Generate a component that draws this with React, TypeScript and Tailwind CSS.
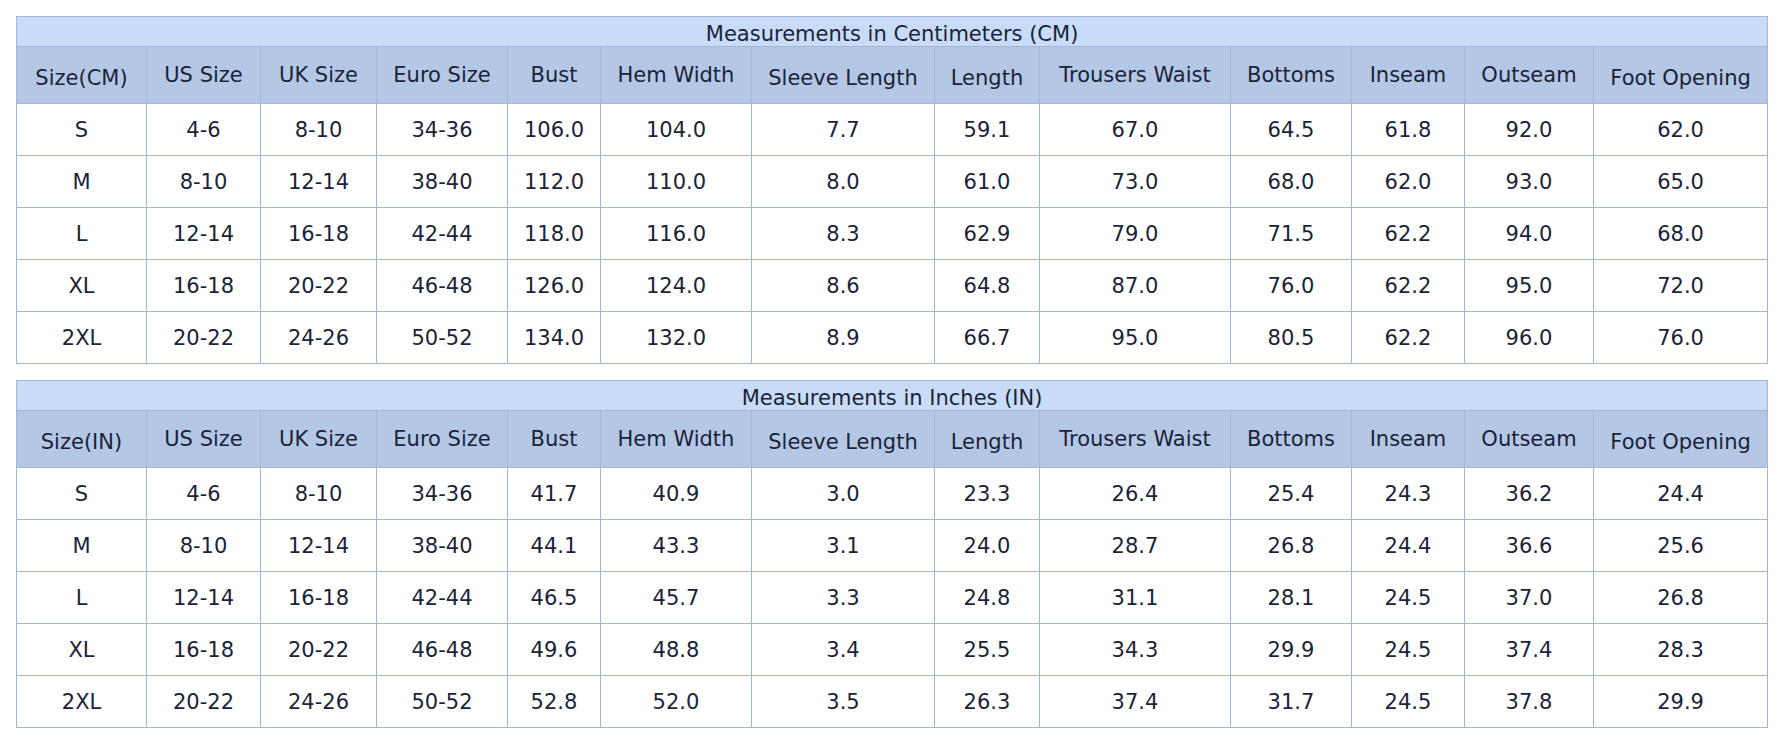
import React, { FC } from "react";

const colWidths = [
  "w-[130px]",
  "w-[114px]",
  "w-[116px]",
  "w-[131px]",
  "w-[93px]",
  "w-[151px]",
  "w-[183px]",
  "w-[105px]",
  "w-[191px]",
  "w-[121px]",
  "w-[113px]",
  "w-[129px]",
  "w-[174px]",
];

const headers = [
  "US Size",
  "UK Size",
  "Euro Size",
  "Bust",
  "Hem Width",
  "Sleeve Length",
  "Length",
  "Trousers Waist",
  "Bottoms",
  "Inseam",
  "Outseam",
  "Foot Opening",
];

// headers with descenders sit a little lower in the screenshot
const lowHeaders = ["Sleeve Length", "Length", "Foot Opening"];

const cmRows: string[][] = [
  ["S", "4-6", "8-10", "34-36", "106.0", "104.0", "7.7", "59.1", "67.0", "64.5", "61.8", "92.0", "62.0"],
  ["M", "8-10", "12-14", "38-40", "112.0", "110.0", "8.0", "61.0", "73.0", "68.0", "62.0", "93.0", "65.0"],
  ["L", "12-14", "16-18", "42-44", "118.0", "116.0", "8.3", "62.9", "79.0", "71.5", "62.2", "94.0", "68.0"],
  ["XL", "16-18", "20-22", "46-48", "126.0", "124.0", "8.6", "64.8", "87.0", "76.0", "62.2", "95.0", "72.0"],
  ["2XL", "20-22", "24-26", "50-52", "134.0", "132.0", "8.9", "66.7", "95.0", "80.5", "62.2", "96.0", "76.0"],
];

const inRows: string[][] = [
  ["S", "4-6", "8-10", "34-36", "41.7", "40.9", "3.0", "23.3", "26.4", "25.4", "24.3", "36.2", "24.4"],
  ["M", "8-10", "12-14", "38-40", "44.1", "43.3", "3.1", "24.0", "28.7", "26.8", "24.4", "36.6", "25.6"],
  ["L", "12-14", "16-18", "42-44", "46.5", "45.7", "3.3", "24.8", "31.1", "28.1", "24.5", "37.0", "26.8"],
  ["XL", "16-18", "20-22", "46-48", "49.6", "48.8", "3.4", "25.5", "34.3", "29.9", "24.5", "37.4", "28.3"],
  ["2XL", "20-22", "24-26", "50-52", "52.8", "52.0", "3.5", "26.3", "37.4", "31.7", "24.5", "37.8", "29.9"],
];

interface SizeTableProps {
  title: string;
  unit: string;
  rows: string[][];
}

const SizeTable: FC<SizeTableProps> = ({ title, unit, rows }) => {
  return (
    <table className="w-[1751px] table-fixed border-collapse border border-[#a3b6d8] text-[21px] leading-[24px] text-[#1b2338]">
      <colgroup>
        {colWidths.map((w, i) => (
          <col key={i} className={w} />
        ))}
      </colgroup>
      <thead>
        <tr className="h-[30px]">
          <th
            colSpan={13}
            className="border border-[#a3b6d8] bg-[#c9dcf7] p-0 pt-[5px] text-center align-bottom font-normal"
          >
            {title}
          </th>
        </tr>
        <tr className="h-[57px]">
          <th className="border border-[#a3b6d8] bg-[#b4c8e6] p-0 pt-[6px] text-center align-middle font-normal">
            Size({unit})
          </th>
          {headers.map((h) => (
            <th
              key={h}
              className={
                lowHeaders.includes(h)
                  ? "border border-[#a3b6d8] bg-[#b4c8e6] p-0 pt-[6px] text-center align-middle font-normal whitespace-nowrap"
                  : "border border-[#a3b6d8] bg-[#b4c8e6] p-0 text-center align-middle font-normal whitespace-nowrap"
              }
            >
              {h}
            </th>
          ))}
        </tr>
      </thead>
      <tbody>
        {rows.map((row) => (
          <tr key={row[0]} className="h-[52px]">
            {row.map((cell, i) => (
              <td
                key={i}
                className="border border-[#a3b6d8] bg-white p-0 text-center align-middle"
              >
                {cell}
              </td>
            ))}
          </tr>
        ))}
      </tbody>
    </table>
  );
};

export default function App() {
  return (
    <div className="min-h-screen bg-white p-4 font-['DejaVu_Sans',sans-serif]">
      <div className="flex flex-col gap-4">
        <SizeTable title="Measurements in Centimeters (CM)" unit="CM" rows={cmRows} />
        <SizeTable title="Measurements in Inches (IN)" unit="IN" rows={inRows} />
      </div>
    </div>
  );
}
